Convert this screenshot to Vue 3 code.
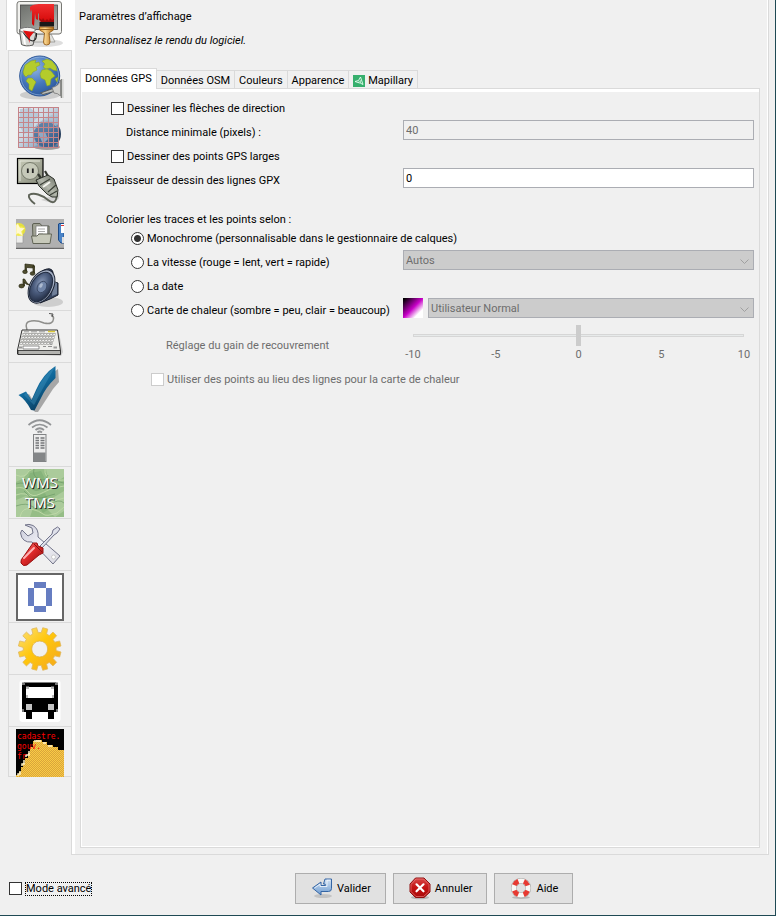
<script setup>
import { ref } from 'vue'

const categories = [
  { id: 'display', label: "Paramètres d’affichage" },
  { id: 'connection', label: 'Connexion' },
  { id: 'projection', label: 'Projection' },
  { id: 'plugin', label: 'Greffons' },
  { id: 'toolbar', label: "Barre d’outils" },
  { id: 'audio', label: 'Audio' },
  { id: 'shortcuts', label: 'Raccourcis clavier' },
  { id: 'validator', label: 'Validateur' },
  { id: 'remote', label: 'Contrôle à distance' },
  { id: 'imagery', label: 'Imagerie' },
  { id: 'tools', label: 'Outils' },
  { id: 'digit', label: 'Adresses' },
  { id: 'gear', label: 'Avancé' },
  { id: 'transport', label: 'Transport public' },
  { id: 'cadastre', label: 'Cadastre' }
]
const subTabs = ['Données GPS', 'Données OSM', 'Couleurs', 'Apparence', 'Mapillary']

const activeCategory = ref('display')
const activeTab = ref('Données GPS')
const colorMode = ref('mono')
const lineWidth = ref('0')

// Outline of a cog wheel with twelve teeth.
function cog(cx, cy, outer, inner, teeth) {
  const points = []
  const step = (Math.PI * 2) / teeth
  for (let i = 0; i < teeth; i++) {
    const a = i * step + step / 2
    for (const [offset, r] of [[-0.32, inner], [-0.23, outer], [0.23, outer], [0.32, inner]]) {
      const t = a + offset * step
      points.push(`${(cx + r * Math.cos(t)).toFixed(2)} ${(cy + r * Math.sin(t)).toFixed(2)}`)
    }
  }
  return `M${points.join('L')}Z`
}
const cogPath = cog(23.7, 24, 21.5, 16.5, 12)
const gridLines = [2, 7, 12, 17, 22, 27, 32, 37, 42]
const keyRows = [20, 23, 26, 29]
const keyCols = [0, 1, 2, 3, 4, 5, 6, 7, 8, 9, 10]
</script>

<template>
  <div class="window">
    <div class="body">
      <nav class="categories" role="tablist" aria-label="Catégories">
        <button
          v-for="c in categories"
          :key="c.id"
          type="button"
          role="tab"
          class="category"
          :class="{ active: c.id === activeCategory }"
          :aria-label="c.label"
          :aria-selected="c.id === activeCategory"
          @click="activeCategory = c.id"
        >
          <svg class="icon" viewBox="0 0 48 48" aria-hidden="true">
            <g v-if="c.id === 'display'">
              <defs>
                <linearGradient id="scr" x1="0" y1="0" x2="1" y2="1"><stop offset="0" stop-color="#6e716d" /><stop offset=".5" stop-color="#8c8f8a" /><stop offset="1" stop-color="#b9bbb7" /></linearGradient>
                <linearGradient id="red" x1="0" y1="0" x2="0" y2="1"><stop offset="0" stop-color="#f03030" /><stop offset="1" stop-color="#d00000" /></linearGradient>
                <linearGradient id="wood" x1="0" y1="0" x2="1" y2="0"><stop offset="0" stop-color="#e9a23c" /><stop offset=".4" stop-color="#f8d48e" /><stop offset="1" stop-color="#b86d10" /></linearGradient>
              </defs>
              <ellipse cx="27" cy="43" rx="20" ry="4" fill="#000" opacity=".13" />
              <path d="M20 34h15l4 8H16z" fill="#e2e2de" stroke="#8b8b87" stroke-width=".7" />
              <rect x="1" y="1.500" width="44.500" height="32.500" rx="2.500" fill="#f1f1ee" stroke="#777773" />
              <rect x="4.500" y="5" width="37" height="24.500" fill="url(#scr)" stroke="#444" stroke-width=".8" />
              <path d="M14 7C17 4 22 4 26 4H38V22H25L23 20V14L22 13V20L20 19L19 13L18 26L16 24V12L15 9L14 13z" fill="url(#red)" />
              <path d="M23 18L25 22H38V19L36 20L34 18L33 21L31 19L29 21L27 18L26 20z" fill="#7c0606" opacity=".6" />
              <path d="M23.500 22H38v4.500H23.500z" fill="#191919" />
              <path d="M23.500 27H37.500V30L33 33L34 42Q34 45 30.500 45Q27.500 45 27.500 42L28.500 33L23.500 30z" fill="url(#wood)" stroke="#8a520f" stroke-width=".8" />
              <path d="M23.500 29.500H37.500" stroke="#9a6421" />
              <path d="M3.500 30L5.500 44.500Q10 47 17 45L20 33z" fill="#d9d9d6" stroke="#5a5a58" />
              <path d="M6 33L8 44L10 45L8.500 33z" fill="#fff" />
              <ellipse cx="11.500" cy="30" rx="8" ry="2.600" fill="#f5f5f3" stroke="#777" />
              <path d="M7 30.500L18 32L14 37L13.500 43L12 38z" fill="#e01111" />
              <path d="M7.500 33Q13 41 17 41Q21 40 20.500 33" fill="none" stroke="#222" stroke-width="1.100" />
            </g>
            <g v-else-if="c.id === 'connection'">
              <defs>
                <radialGradient id="sea" cx=".38" cy=".3" r=".8"><stop offset="0" stop-color="#8fb3e4" /><stop offset=".5" stop-color="#4779bd" /><stop offset="1" stop-color="#244f94" /></radialGradient>
              </defs>
              <ellipse cx="24" cy="42" rx="20" ry="4.500" fill="#000" opacity=".15" />
              <circle cx="23.700" cy="23" r="20" fill="url(#sea)" stroke="#2b5596" />
              <circle cx="23.700" cy="23" r="18.900" fill="none" stroke="#a4c2ea" stroke-width=".8" opacity=".7" />
              <g fill="#b4cc2c" stroke="#86a11c" stroke-width=".5">
                <path d="M7 19L9 12L15 8L20 7L19 10L23 9L24 12L20 14L21 17L17 19L15 22L12 22L10 24L8 22z" />
                <path d="M12 25L16 25L20 29L18 33L16 38L13 36L13 31L10 28z" />
                <path d="M26 8L31 6L36 8L40 13L41 18L37 17L34 15L30 16L27 14L29 11z" />
                <path d="M26 17L31 16L35 18L39 23L35 26L34 32L31 33L29 27L25 25L24 21z" />
                <path d="M39 26L42 24L41 29z" />
              </g>
              <path d="M24.500 40L37 35.500L38 38.500L27 41.500z" fill="#b9bbb7" stroke="#555753" stroke-width=".9" />
              <path d="M36 34.500Q43 33 44.500 27V43Q42 40 38 40z" fill="#cfcfcb" stroke="#777" stroke-width=".8" />
              <path d="M45.500 26V45" stroke="#858783" stroke-width="1.500" /><path d="M47.200 26V45" stroke="#d7d7d5" />
            </g>
            <g v-else-if="c.id === 'projection'">
              <defs>
                <linearGradient id="map" x1="0" y1="0" x2="1" y2="1"><stop offset="0" stop-color="#f0f3f6" /><stop offset=".45" stop-color="#c0d1e0" /><stop offset="1" stop-color="#3c6390" /></linearGradient>
                <radialGradient id="ball" cx=".4" cy=".35" r=".7"><stop offset="0" stop-color="#7b9cc0" /><stop offset=".6" stop-color="#3b6290" /><stop offset="1" stop-color="#17293f" /></radialGradient>
              </defs>
              <ellipse cx="31" cy="42" rx="13" ry="3" fill="#000" opacity=".35" />
              <circle cx="31" cy="29" r="14" fill="url(#ball)" />
              <rect x="2" y="2" width="40.500" height="40.500" fill="url(#map)" opacity=".8" />
              <path d="M4 4L14 3L24 10L17 17L19 24L8 29L3 20zM26 15L38 9L41 20L34 25L27 22z" fill="#a9bfd2" opacity=".7" />
              <path d="M18 26Q24 15 34 17Q42 21 42 28V37Q33 45 23 40Q17 35 18 26" fill="#275283" opacity=".55" />
              <path d="M22 28L29 27L32 34L27 39z" fill="#a8bfd6" opacity=".7" />
              <g stroke="#c58489" stroke-width="1">
                <path v-for="n in gridLines" :key="n" :d="`M${n + 0.5} 2V43M2 ${n + 0.5}H43`" />
              </g>
            </g>
            <g v-else-if="c.id === 'plugin'">
              <defs>
                <linearGradient id="plate" x1="0" y1="0" x2="1" y2="1"><stop offset="0" stop-color="#c9ccb9" /><stop offset="1" stop-color="#85897a" /></linearGradient>
                <linearGradient id="plug" x1="0" y1="1" x2="1" y2="0"><stop offset="0" stop-color="#565b51" /><stop offset=".5" stop-color="#b4b8ad" /><stop offset="1" stop-color="#60655a" /></linearGradient>
              </defs>
              <path d="M25 43L44 35L43 42L36 46z" fill="#000" opacity=".12" />
              <rect x="1.500" y="1.500" width="25.500" height="25" fill="url(#plate)" stroke="#000" stroke-width="1.200" />
              <path d="M4 24V4H24" fill="none" stroke="#e4e6da" />
              <circle cx="14" cy="14" r="8.500" fill="#c6c9b9" stroke="#777b6c" />
              <path d="M11.800 11.500V16M16.800 11.500V16" stroke="#222" stroke-width="1.800" />
              <path d="M41 38C40 46 37 47 32 43C26 38 18 35 13 38C12 41 15 44 19 47" fill="none" stroke="#5e6358" stroke-width="1.900" />
              <path d="M22 17L27 24M29 14L33 21" stroke="#33372f" stroke-width="2.200" />
              <path d="M20 23L32 18L38 22L42 33L41 40L36 40L31 37L23 29z" fill="url(#plug)" stroke="#2c3029" />
              <path d="M24 28L34 22M32 35L40 28M34 38L41 34" stroke="#3c4138" stroke-width="1.200" />
              <path d="M27 30L34 25" stroke="#f4f5ef" stroke-width="2" />
            </g>
            <g v-else-if="c.id === 'toolbar'">
              <rect y="10" width="48" height="30" fill="#b0b0b0" /><rect y="38.800" width="48" height="1.200" fill="#666" />
              <path d="M0 17H7V34H0z" fill="#ededeb" stroke="#999" stroke-width=".7" />
              <circle cx="3" cy="20.500" r="6.500" fill="#f2ec25" opacity=".8" />
              <path d="M2 14.500L4 18.500L9 19L5.500 22.500L7 27L2 24.500L0 26V16z" fill="#fff9d2" stroke="#f4e84e" stroke-width=".5" />
              <path d="M16.500 16Q16.500 14.500 18 14.500H24L26 17H33V31H17z" fill="#a1a395" stroke="#5d6053" />
              <path d="M20 17H31.500V28H20z" fill="#fff" stroke="#777" stroke-width=".7" />
              <path d="M22 20H29M22 22.500H29M22 25H27" stroke="#aaa" />
              <path d="M15.500 27H21L23 25H35.500L34 34.500H17z" fill="#c7c9ba" stroke="#626557" />
              <path d="M43 14.500H48V34H45L42.500 31V15z" fill="#4b84c7" stroke="#1d4a87" />
              <path d="M45 15H48V24H45z" fill="#fff" /><path d="M45 16.500H48" stroke="#d33" /><path d="M46 28H48V34H46z" fill="#ddd" />
            </g>
            <g v-else-if="c.id === 'audio'">
              <defs>
                <radialGradient id="cone" cx=".4" cy=".4" r=".65"><stop offset="0" stop-color="#8f9fbd" /><stop offset=".5" stop-color="#4b5c7d" /><stop offset="1" stop-color="#222c42" /></radialGradient>
              </defs>
              <ellipse cx="32" cy="41" rx="15" ry="5" fill="#000" opacity=".14" />
              <path d="M26 10Q35 5 37 11L36 20L42 22V34L34 38L24 42z" fill="#394763" stroke="#151b29" />
              <path d="M37 20L41 22V33L36 35z" fill="#718099" />
              <ellipse cx="25.500" cy="25.500" rx="11.500" ry="18" transform="rotate(30 25.500 25.500)" fill="#a4afc4" stroke="#1d2433" />
              <ellipse cx="25" cy="26" rx="9.800" ry="16" transform="rotate(30 25 26)" fill="url(#cone)" stroke="#202a3e" />
              <ellipse cx="26" cy="26" rx="4.500" ry="6" transform="rotate(30 26 26)" fill="#7185a8" stroke="#35425d" stroke-width=".8" />
              <ellipse cx="25" cy="24.500" rx="1.500" ry="2.500" transform="rotate(30 25 24.500)" fill="#aebbd0" />
              <g fill="#504e31" stroke="#26250f" stroke-width=".7">
                <path d="M9 3L18 4V7L10.500 6.500V10H9z" /><path d="M17 5H18.500V12H17z" />
                <ellipse cx="9" cy="10.800" rx="2.300" ry="1.800" /><ellipse cx="16.500" cy="12.500" rx="2.300" ry="1.800" />
                <path d="M7 18L8.500 18L11 22L13.500 24L10 23L8.500 21V25H7z" /><ellipse cx="5.500" cy="25" rx="2.600" ry="1.900" />
              </g>
            </g>
            <g v-else-if="c.id === 'shortcuts'">
              <path d="M8 41L45 43L47 39L43 20z" fill="#000" opacity=".15" />
              <path d="M11 17Q8 9 15 8Q21 7 28 10Q37 12 37.500 6Q38 3 35 2" fill="none" stroke="#8e8e8b" stroke-width="1.500" />
              <path d="M33 .5L37 1L36 4" fill="none" stroke="#555" />
              <path d="M6 17H41.500L44.500 38V41H1.500V37z" fill="#eeeeeb" stroke="#333" />
              <path d="M2 37.500H44.500V41.500H2z" fill="#b4b4b1" stroke="#222" stroke-width=".8" />
              <path d="M8 18.800H13M15 18.800H21M23 18.800H29" stroke="#999" />
              <path d="M32 18.500H39" stroke="#d9c738" stroke-width="1.500" />
              <g v-for="(y, i) in keyRows" :key="y">
                <rect v-for="k in keyCols" :key="k" :x="7 - i + k * 3" :y="y + 0.6" width="2.200" height="1.900" fill="#fff" stroke="#8c8c89" stroke-width=".6" />
              </g>
              <path d="M7 34.500H23" stroke="#fff" stroke-width="2.500" /><path d="M7 33V36H23V33zM27 33.500H30M32 33.500H36M34 31H36" fill="none" stroke="#777" stroke-width=".8" />
              <path d="M3 34.500H6M37.500 34.500H41" stroke="#999" stroke-width="2" />
            </g>
            <g v-else-if="c.id === 'validator'">
              <defs>
                <linearGradient id="tick" x1="0" y1="0" x2=".6" y2="1"><stop offset="0" stop-color="#3587b5" /><stop offset=".55" stop-color="#10699c" /><stop offset="1" stop-color="#083a5b" /></linearGradient>
              </defs>
              <path d="M6 32L13 29L18 37L30 13L42 4L43 17L37 24L22 47H19z" fill="#000" opacity=".3" />
              <path d="M2.500 30L10 26.500L15.500 35L20 25Q27 9 39.500 1L39.500 13Q30 22 25 33L18.500 45.500L15 45Q10 35 2.500 30z" fill="url(#tick)" />
              <path d="M10 27L15.500 36L22 23Q28 10 39 2Q32 14 26 25L18 40L8 30z" fill="#4b9ac4" opacity=".35" />
            </g>
            <g v-else-if="c.id === 'remote'">
              <g fill="none" stroke="#929496" stroke-width="1.700">
                <path d="M19.500 13Q23.700 9.500 28 13" /><path d="M16 10.500Q23.700 4.500 31.500 10.500" /><path d="M12.500 8Q23.700 -1.500 35 8" />
                <path d="M21.500 15.500Q23.700 13.500 26 15.500" />
              </g>
              <rect x="17.500" y="17.500" width="12.500" height="27" fill="#ececec" stroke="#818385" />
              <path d="M18 35.500H29.500V44H18z" fill="#848688" />
              <path d="M19.500 21H23M24.500 21H28.500M19.500 23.500H23M24.500 23.500H28.500M19.500 26H23M24.500 26H28.500M19.500 28.500H23M24.500 28.500H28.500M19.500 31H23M24.500 31H28.500" stroke="#75777a" stroke-width="1.400" />
            </g>
            <g v-else-if="c.id === 'imagery'">
              <rect width="48" height="48" fill="#95bd86" />
              <path d="M0 0H14L8 9L0 13zM30 0H48V8L39 14L32 9zM0 31L10 27L19 33L14 48H0zM35 30L48 22V42L39 48L31 40z" fill="#abcb9b" />
              <path d="M14 4L25 2L31 14L22 21L9 17zM17 28L29 24L36 38L27 44z" fill="#86b37a" />
              <g fill="none" stroke="#bfd9a8" stroke-width=".9">
                <path d="M0 6Q9 10 13 2L17 0M0 19Q8 17 12 23T24 25T35 20T48 17" /><path d="M0 26Q10 22 17 30T30 35T48 29" /><path d="M4 48Q6 38 15 40T27 45T41 44L48 38" /><path d="M29 0Q28 8 36 10T48 11" />
              </g>
              <g fill="none" stroke="#679461" stroke-width=".6">
                <path d="M0 15Q9 12 14 18T27 19T38 13T48 14" /><path d="M0 37Q11 33 17 38T33 36T48 34" /><path d="M18 0Q16 7 23 10T32 6" /><path d="M8 22L14 28L25 29L39 25" />
              </g>
              <g font-family="'Noto Sans', sans-serif" font-size="15" text-anchor="middle">
                <text x="25" y="20" fill="#222">WMS</text><text x="25" y="40" fill="#222">TMS</text>
                <text x="24" y="19" fill="#fff">WMS</text><text x="24" y="39" fill="#fff">TMS</text>
              </g>
            </g>
            <g v-else-if="c.id === 'tools'">
              <defs>
                <linearGradient id="steel" x1="0" y1="0" x2="1" y2="1"><stop offset="0" stop-color="#c8cad8" /><stop offset=".5" stop-color="#f2f2f8" /><stop offset="1" stop-color="#d8d8e0" /></linearGradient>
                <linearGradient id="grip" x1="0" y1="0" x2="1" y2="1"><stop offset="0" stop-color="#f88" /><stop offset=".45" stop-color="#e02b2b" /><stop offset="1" stop-color="#8f0707" /></linearGradient>
              </defs>
              <path d="M9 4Q13 2.500 17 4.500Q23 8 22 16L44 35L37 43L16 21Q6 22 4.500 12L6 9L12 15L17 12L16 7z" fill="url(#steel)" stroke="#73758a" />
              <circle cx="37.500" cy="36" r="2" fill="#fff" stroke="#bbb" stroke-width=".7" />
              <path d="M24 25L36 13L37 9L41.500 6L44 8L41 12L38 14L26 27z" fill="#dfe1ea" stroke="#70728a" />
              <path d="M17 22L21 22L22 25L27 27L27 32L23 34L11 44Q7 46 5 42Q4 39 8 35z" fill="url(#grip)" stroke="#9a1010" />
              <path d="M8 37L18 27" stroke="#ffb2b2" stroke-width="2" stroke-linecap="round" /><path d="M18 23L26 31" stroke="#861010" />
            </g>
            <g v-else-if="c.id === 'digit'">
              <rect x="1" y="1" width="46" height="46" fill="#fff" stroke="#666" stroke-width="2" />
              <path d="M18 9H30V15H36V33H30V39H18V33H12V15H18zM18 15V33H30V15z" fill="#667dc1" fill-rule="evenodd" />
            </g>
            <g v-else-if="c.id === 'gear'">
              <defs>
                <linearGradient id="gold" x1="0" y1="0" x2="1" y2="1"><stop offset="0" stop-color="#fbe07e" /><stop offset=".45" stop-color="#ffc70d" /><stop offset="1" stop-color="#f3a51f" /></linearGradient>
              </defs>
              <path :d="cogPath" fill="url(#gold)" stroke="#e0b860" stroke-width=".8" stroke-linejoin="round" />
              <circle cx="23.700" cy="24" r="8" fill="#f0f0f0" stroke="#e0b040" stroke-width=".8" />
            </g>
            <g v-else-if="c.id === 'transport'">
              <rect x="3.500" y="3" width="41" height="42" rx="3" fill="#fff" />
              <path d="M8 5.500H40L42 8V35H38V42H32V35H16V42H10V35H6V8z" fill="#000" />
              <path d="M10 10H38V21H10z" fill="#fff" /><path d="M10 9.500H13V12H10zM35 9.500H38V12H35zM10 18H12V21H10zM36 18H38V21H36z" fill="#bbb" />
              <path d="M10 27H16V33H10zM32 27H38V33H32z" fill="#c4c4c4" /><path d="M6 5.500H9V8H6zM39 5.500H42V8H39zM6 32H8V35H6zM40 32H42V35H40z" fill="#777" />
            </g>
            <g v-else>
              <defs>
                <pattern id="dither" width="2" height="2" patternUnits="userSpaceOnUse"><rect width="2" height="2" fill="#f9cb45" /><rect width="1" height="1" fill="#d9a43c" /><rect x="1" y="1" width="1" height="1" fill="#d9a43c" /></pattern>
              </defs>
              <rect width="48" height="48" fill="#000" />
              <path d="M0 48V46H3V43H5V38H7V34H9V29H12V24H14V18H17V12H20V11H26V13H31V16H37V18H42V21H48V48z" fill="url(#dither)" />
              <path d="M2 47V45H4V42M6 37V35H8V31M10 28V26H13V22M18 12H25M27 14H30M32 17H36" fill="none" stroke="#fff3c8" stroke-width="1.500" />
              <g font-family="'DejaVu Sans Mono', monospace" font-size="8" fill="#f00">
                <text x="1" y="10">cadastre.</text><text x="1" y="20">gouv.</text><text x="1" y="30">fr</text>
              </g>
            </g>
          </svg>
        </button>
      </nav>

      <main class="page">
        <h1 class="title">Paramètres d’affichage</h1>
        <p class="subtitle">Personnalisez le rendu du logiciel.</p>

        <div class="tabs" role="tablist">
          <button
            v-for="t in subTabs"
            :key="t"
            type="button"
            role="tab"
            class="tab"
            :class="{ active: t === activeTab }"
            :aria-selected="t === activeTab"
            @click="activeTab = t"
          >
            <svg v-if="t === 'Mapillary'" class="mapillary" viewBox="0 0 12 12" aria-hidden="true">
              <rect width="12" height="12" fill="#36af6d" />
              <path d="M7.500 2L10 9.500L7.500 8.200L5 7.500L2 6.500L5.500 5.500z" fill="none" stroke="#e9fff2" stroke-width=".9" /><path d="M5 7.500L7.500 5.500L7.500 8" fill="none" stroke="#e9fff2" stroke-width=".6" />
            </svg>
            {{ t }}
          </button>
        </div>

        <form class="panel" @submit.prevent>
          <div class="row">
            <label class="choice indent-1"><input type="checkbox" />Dessiner les flèches de direction</label>
          </div>
          <div class="row">
            <label class="caption indent-2" for="min-distance">Distance minimale (pixels) :</label>
            <input id="min-distance" class="field" type="text" value="40" disabled />
          </div>
          <div class="row">
            <label class="choice indent-1"><input type="checkbox" />Dessiner des points GPS larges</label>
          </div>
          <div class="row">
            <label class="caption" for="line-width">Épaisseur de dessin des lignes GPX</label>
            <input id="line-width" v-model="lineWidth" class="field" type="text" />
          </div>

          <p class="group-title">Colorier les traces et les points selon :</p>
          <div class="row">
            <label class="choice indent-3 wide"><input v-model="colorMode" type="radio" name="color" value="mono" />Monochrome (personnalisable dans le gestionnaire de calques)</label>
          </div>
          <div class="row">
            <label class="choice indent-3"><input v-model="colorMode" type="radio" name="color" value="speed" />La vitesse (rouge = lent, vert = rapide)</label>
            <div class="combo">
              <select aria-label="Type de vitesse" disabled><option>Autos</option></select>
              <svg class="chevron" viewBox="0 0 9 5" aria-hidden="true"><path d="M.5 .5L4.500 4.500L8.500 .5" /></svg>
            </div>
          </div>
          <div class="row">
            <label class="choice indent-3"><input v-model="colorMode" type="radio" name="color" value="date" />La date</label>
          </div>
          <div class="row">
            <label class="choice indent-3"><input v-model="colorMode" type="radio" name="color" value="heat" />Carte de chaleur (sombre = peu, clair = beaucoup)</label>
            <div class="heat">
              <span class="swatch"></span>
              <div class="combo">
                <select aria-label="Palette de chaleur" disabled><option>Utilisateur Normal</option></select>
                <svg class="chevron" viewBox="0 0 9 5" aria-hidden="true"><path d="M.5 .5L4.500 4.500L8.500 .5" /></svg>
              </div>
            </div>
          </div>
          <div class="row gain">
            <label class="caption indent-5 off" for="gain">Réglage du gain de recouvrement</label>
            <div class="slider">
              <input id="gain" type="range" min="-10" max="10" value="0" disabled />
              <div class="scale off"><span>-10</span><span>-5</span><span>0</span><span>5</span><span>10</span></div>
            </div>
          </div>
          <div class="row">
            <label class="choice indent-4 wide off"><input type="checkbox" disabled />Utiliser des points au lieu des lignes pour la carte de chaleur</label>
          </div>
        </form>
      </main>
    </div>

    <footer class="footer">
      <label class="choice advanced"><input type="checkbox" /><span>Mode avancé</span></label>
      <div class="actions">
        <button type="button" class="action">
          <svg viewBox="0 0 24 24" aria-hidden="true">
            <defs><linearGradient id="ret" x1="0" y1="0" x2="0" y2="1"><stop offset="0" stop-color="#d4e3f4" /><stop offset="1" stop-color="#6d9bd0" /></linearGradient></defs>
            <ellipse cx="13" cy="20" rx="9" ry="2" fill="#000" opacity=".13" />
            <path d="M15 3H21.500V12.500Q21.500 15.500 18.500 15.500H11V19L2.500 12L11 6V9.500H15.500L15 8H13.500z" fill="url(#ret)" stroke="#3465a4" stroke-linejoin="round" />
            <path d="M4.500 12L10 8.200V10.500H17V4.200H20.300" fill="none" stroke="#fff" opacity=".7" />
          </svg>
          Valider
        </button>
        <button type="button" class="action">
          <svg viewBox="0 0 24 24" aria-hidden="true">
            <defs><linearGradient id="stop" x1="0" y1="0" x2="0" y2="1"><stop offset="0" stop-color="#d84848" /><stop offset=".5" stop-color="#c31212" /><stop offset="1" stop-color="#a90a0a" /></linearGradient></defs>
            <ellipse cx="12" cy="21.500" rx="9" ry="1.700" fill="#000" opacity=".2" />
            <path d="M7.500 2H16L22 8V16L16 21.500H7.500L2 16V8z" fill="url(#stop)" stroke="#8f0f0f" />
            <path d="M8 3H15.500L21 8.500V15.500L15.500 20.500H8L3 15.500V8.500z" fill="none" stroke="#f08a8a" stroke-width=".6" />
            <path d="M8.500 8.300L15.500 15.300M15.500 8.300L8.500 15.300" stroke="#fff" stroke-width="2.200" stroke-linecap="round" />
          </svg>
          Annuler
        </button>
        <button type="button" class="action">
          <svg viewBox="0 0 24 24" aria-hidden="true">
            <ellipse cx="12" cy="21.500" rx="9" ry="1.500" fill="#000" opacity=".18" />
            <circle cx="12" cy="12" r="7.200" fill="none" stroke="#a2a2a0" stroke-width="5.800" />
            <circle cx="12" cy="12" r="7.200" fill="none" stroke="#f8f8f6" stroke-width="4.800" />
            <circle cx="12" cy="12" r="7.200" fill="none" stroke="#e63a32" stroke-width="4.800" stroke-dasharray="5.650 5.650" stroke-dashoffset="-2.830" />
          </svg>
          Aide
        </button>
      </div>
    </footer>
  </div>
</template>

<style>
body {
  margin: 0;
  background: #f0f0f0;
}
</style>

<style scoped>
.window {
  box-sizing: border-box;
  min-height: 100vh;
  display: flex;
  flex-direction: column;
  border-right: 1px solid #1f4a54;
  border-bottom: 1px solid #1f4a54;
  background: #f0f0f0;
  color: #000;
  font-family: Roboto, "Noto Sans", sans-serif;
  font-size: 11px;
  line-height: 14px;
}
.window * {
  box-sizing: border-box;
}
button,
input,
select {
  font: inherit;
  color: inherit;
  margin: 0;
}
.body {
  flex: 1;
  display: flex;
  padding-right: 6px;
}
.categories {
  flex: none;
  width: 71px;
  padding-left: 8px;
  display: flex;
  flex-direction: column;
}
.category {
  display: flex;
  align-items: flex-start;
  height: 52px;
  padding: 2px 0 0 7px;
  border: 0 solid #dadada;
  border-width: 1px 0 0 1px;
  background: #f0f0f0;
}
.category:last-child {
  height: 51px;
  border-bottom-width: 1px;
}
.category.active {
  position: relative;
  height: 50px;
  margin: 0 -4px 0 -2px;
  padding: 0 0 0 9px;
  border-top-width: 0;
  background: #fff;
}
.icon {
  flex: none;
  width: 48px;
  height: 48px;
}
.page {
  flex: 1;
  min-width: 0;
  display: flex;
  flex-direction: column;
  padding: 10px 8px 6px 5px;
  border: 0 solid #dadada;
  border-width: 0 1px 1px 1px;
  box-shadow: inset 3px 0 #fff, inset -1px 0 #fff;
}
.title {
  margin: 0 0 10px 2px;
  font: inherit;
}
.subtitle {
  margin: 0 0 20px 8px;
  font-style: italic;
}
.tabs {
  display: flex;
  align-items: flex-end;
  padding-left: 3px;
  height: 20px;
}
.tab {
  display: flex;
  align-items: center;
  gap: 3px;
  height: 18px;
  padding: 2px 4px 0;
  border: 1px solid #dadada;
  border-width: 1px 1px 0 0;
  background: #f0f0f0;
  white-space: nowrap;
}
.tab.active {
  position: relative;
  height: 21px;
  margin-bottom: -1px;
  padding: 0 4px;
  border-left-width: 1px;
  background: #fff;
}
.mapillary {
  width: 12px;
  height: 12px;
}
.panel {
  flex: 1;
  margin-left: 3px;
  padding: 7px 5px 0 25px;
  border: 1px solid #dadada;
  box-shadow: inset 0 3px #fff, inset 1px -1px #fff;
}
.row {
  display: grid;
  grid-template-columns: 297px minmax(0, 1fr);
  align-items: center;
  min-height: 24px;
}
.choice {
  display: flex;
  align-items: center;
  gap: 3px;
  padding-top: 2px;
  white-space: nowrap;
}
.caption {
  padding-top: 2px;
  white-space: nowrap;
}
.wide {
  grid-column: 1 / -1;
}
.indent-1 { padding-left: 5px; }
.indent-2 { padding-left: 20px; }
.indent-3 { padding-left: 25px; }
.indent-4 { padding-left: 45px; }
.indent-5 { padding-left: 60px; }
.off {
  color: #6d6d6d;
}
.choice input {
  appearance: none;
  flex: none;
  width: 13px;
  height: 13px;
  margin-top: -2px;
  border: 1px solid #333;
  background: #fff;
}
.choice input[type="radio"] {
  border-radius: 50%;
}
.choice input[type="radio"]:checked {
  background: radial-gradient(circle, #333 3px, #fff 4px);
}
.choice input:disabled {
  border-color: #ccc;
}
.field {
  align-self: start;
  width: 100%;
  height: 20px;
  padding: 0 2px;
  border: 1px solid #abadb3;
  border-radius: 0;
  background: #fff;
}
.field:disabled {
  background: #f0f0f0;
  color: #6d6d6d;
}
.group-title {
  margin: 21px 0 0;
  padding-top: 1px;
  line-height: 12px;
}
.combo {
  position: relative;
  align-self: start;
  flex: 1;
}
.combo select {
  appearance: none;
  display: block;
  width: 100%;
  height: 20px;
  padding: 2px 2px 0;
  border: 1px solid #abadb3;
  border-radius: 0;
  background: #ccc;
  color: #6d6d6d;
  opacity: 1;
}
.chevron {
  position: absolute;
  top: 9px;
  right: 5px;
  width: 9px;
  height: 5px;
  fill: none;
  stroke: #a0a0a0;
}
.heat {
  align-self: start;
  display: flex;
  gap: 5px;
}
.swatch {
  width: 20px;
  height: 20px;
  background: linear-gradient(135deg, #000 5%, #c800c8 50%, #fff 78%);
}
.gain {
  min-height: 45px;
}
.slider {
  align-self: start;
  padding-top: 3px;
}
.slider input {
  appearance: none;
  display: block;
  width: calc(100% - 20px);
  height: 21px;
  margin: 0 10px;
  background: none;
}
.slider input::-webkit-slider-runnable-track {
  height: 3px;
  border: 1px solid #d6d6d6;
  background: #e7eaea;
}
.slider input::-webkit-slider-thumb {
  appearance: none;
  width: 5px;
  height: 21px;
  margin-top: -10px;
  background: #ccc;
}
.scale {
  display: flex;
  justify-content: space-between;
  padding-top: 2px;
}
.scale span {
  width: 20px;
  text-align: center;
}
.footer {
  display: flex;
  align-items: center;
  height: 60px;
  padding: 6px 8px 0 9px;
}
.advanced {
  flex: none;
  width: 286px;
}
.advanced span {
  border: 1px dotted #000;
  line-height: 12px;
}
.actions {
  display: flex;
  gap: 7px;
}
.action {
  display: flex;
  align-items: center;
  gap: 3px;
  height: 31px;
  padding: 2px 14px 0;
  border: 1px solid #adadad;
  background: #e1e1e1;
}
.action svg {
  width: 24px;
  height: 24px;
  margin-top: -2px;
}
</style>
